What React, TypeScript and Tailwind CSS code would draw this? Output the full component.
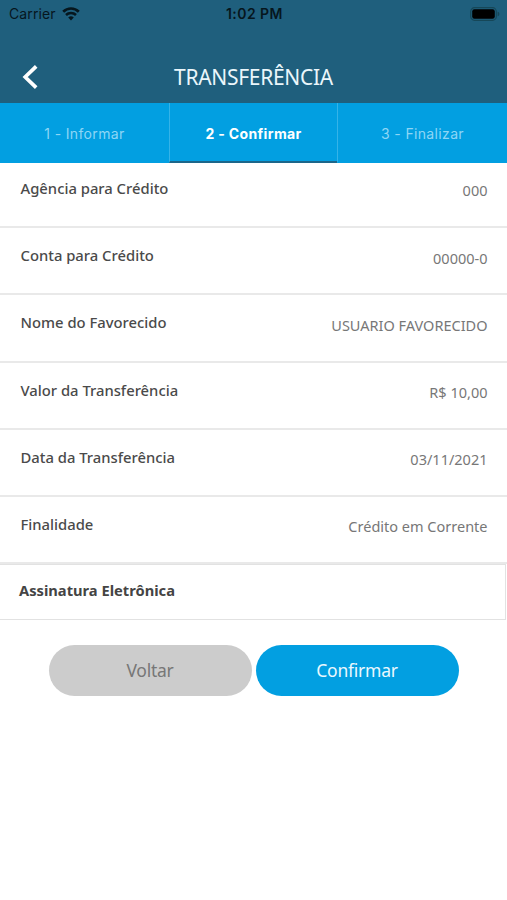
import clsx from "clsx";

const steps = [
  { label: "1 - Informar", active: false },
  { label: "2 - Confirmar", active: true },
  { label: "3 - Finalizar", active: false },
];

const details = [
  { label: "Agência para Crédito", value: "000" },
  { label: "Conta para Crédito", value: "00000-0" },
  { label: "Nome do Favorecido", value: "USUARIO FAVORECIDO" },
  { label: "Valor da Transferência", value: "R$ 10,00" },
  { label: "Data da Transferência", value: "03/11/2021" },
  { label: "Finalidade", value: "Crédito em Corrente" },
];

function WifiIcon() {
  return (
    <svg className="w-[18px] h-[14px]" viewBox="0 0 18 14" fill="none">
      <path d="M1.2 4.7a11.1 11.1 0 0 1 15.6 0" stroke="#06161d" strokeWidth="2.7" />
      <path d="M4 8a7.1 7.1 0 0 1 10 0" stroke="#06161d" strokeWidth="2.5" />
      <path d="M9 13.4 6.2 10.5a4 4 0 0 1 5.6 0z" fill="#06161d" />
    </svg>
  );
}

function BatteryIcon() {
  return (
    <svg className="w-[30px] h-[14px]" viewBox="0 0 30 14" fill="none">
      <rect x="0.7" y="0.7" width="25.6" height="12.6" rx="3.8" stroke="#164758" strokeWidth="1.2" />
      <rect x="2.2" y="2.3" width="22.6" height="9.4" rx="2.2" fill="#000" />
      <path d="M27.6 4.8c1.1.3 1.8 1.1 1.8 2.2s-.7 1.9-1.8 2.2z" fill="#164758" />
    </svg>
  );
}

function StatusBar() {
  return (
    <div className="grid grid-cols-3 items-center h-[27px] pl-[9px] pr-[7px] font-['Inter',sans-serif] text-[#06161d]">
      <div className="flex items-center gap-[6px]">
        <span className="text-[14px] tracking-[0.1px]">Carrier</span>
        <WifiIcon />
      </div>
      <span className="text-center text-[14px] font-semibold tracking-[0.45px]">
        1:02 PM
      </span>
      <div className="flex justify-end">
        <BatteryIcon />
      </div>
    </div>
  );
}

function Header() {
  return (
    <header className="h-[103px] bg-[#1f5f7d]">
      <StatusBar />
      <div className="flex items-center mt-[25px] h-[50px] pl-[22px] pr-[38px]">
        <button className="w-4">
          <svg className="w-4 h-6" viewBox="0 0 16 24" fill="none">
            <path d="M14.2 1.4 3.2 12l11 10.6" stroke="#fff" strokeWidth="3.7" />
          </svg>
        </button>
        <h1 className="flex-1 pt-[2px] text-center text-[21px] tracking-[-0.3px] text-[#eaf6fb]">
          TRANSFERÊNCIA
        </h1>
      </div>
    </header>
  );
}

export default function App() {
  return (
    <div className="w-full h-screen overflow-hidden bg-white font-['Noto_Sans',sans-serif]">
      <Header />
      <nav className="grid grid-cols-[169px_168px_1fr] h-[60px] bg-[#029fe1] font-['Inter',sans-serif] text-[14px] tracking-[0.35px]">
        {steps.map((step, index) => (
          <div
            key={step.label}
            className={clsx(
              "flex items-center justify-center border-b-2 pt-[2px]",
              index > 0 && "border-l border-l-[#35b3e8]",
              step.active
                ? "border-b-[#1c668a] font-bold text-white"
                : "border-b-transparent text-[#8ed6f5]"
            )}
          >
            {step.label}
          </div>
        ))}
      </nav>
      <div className="-mt-[2px]">
        {details.map((item) => (
          <div
            key={item.label}
            className="flex justify-between h-[67.2px] pl-[20.5px] pr-[19.5px] border-b-2 border-[#e9e9e9]"
          >
            <span className="mt-[17px] text-[14.8px] leading-5 font-medium text-[#4a4a4a]">
              {item.label}
            </span>
            <span className="mt-[19.4px] text-[14.5px] leading-5 text-[#777]">
              {item.value}
            </span>
          </div>
        ))}
      </div>
      <div className="flex items-center h-[56px] mr-px pl-[19px] pb-[4px] border border-l-0 border-[#e2e2e2] text-[14.7px] font-bold text-[#444]">
        Assinatura Eletrônica
      </div>
      <div className="flex justify-center gap-1 mt-[24.5px] text-[17.5px] tracking-[-0.25px]">
        <button className="w-[203px] h-[51px] rounded-full bg-[#cccccc] text-[#777]">
          Voltar
        </button>
        <button className="w-[203px] h-[51px] rounded-full bg-[#029fe1] text-[#eaf8fe]">
          Confirmar
        </button>
      </div>
    </div>
  );
}
